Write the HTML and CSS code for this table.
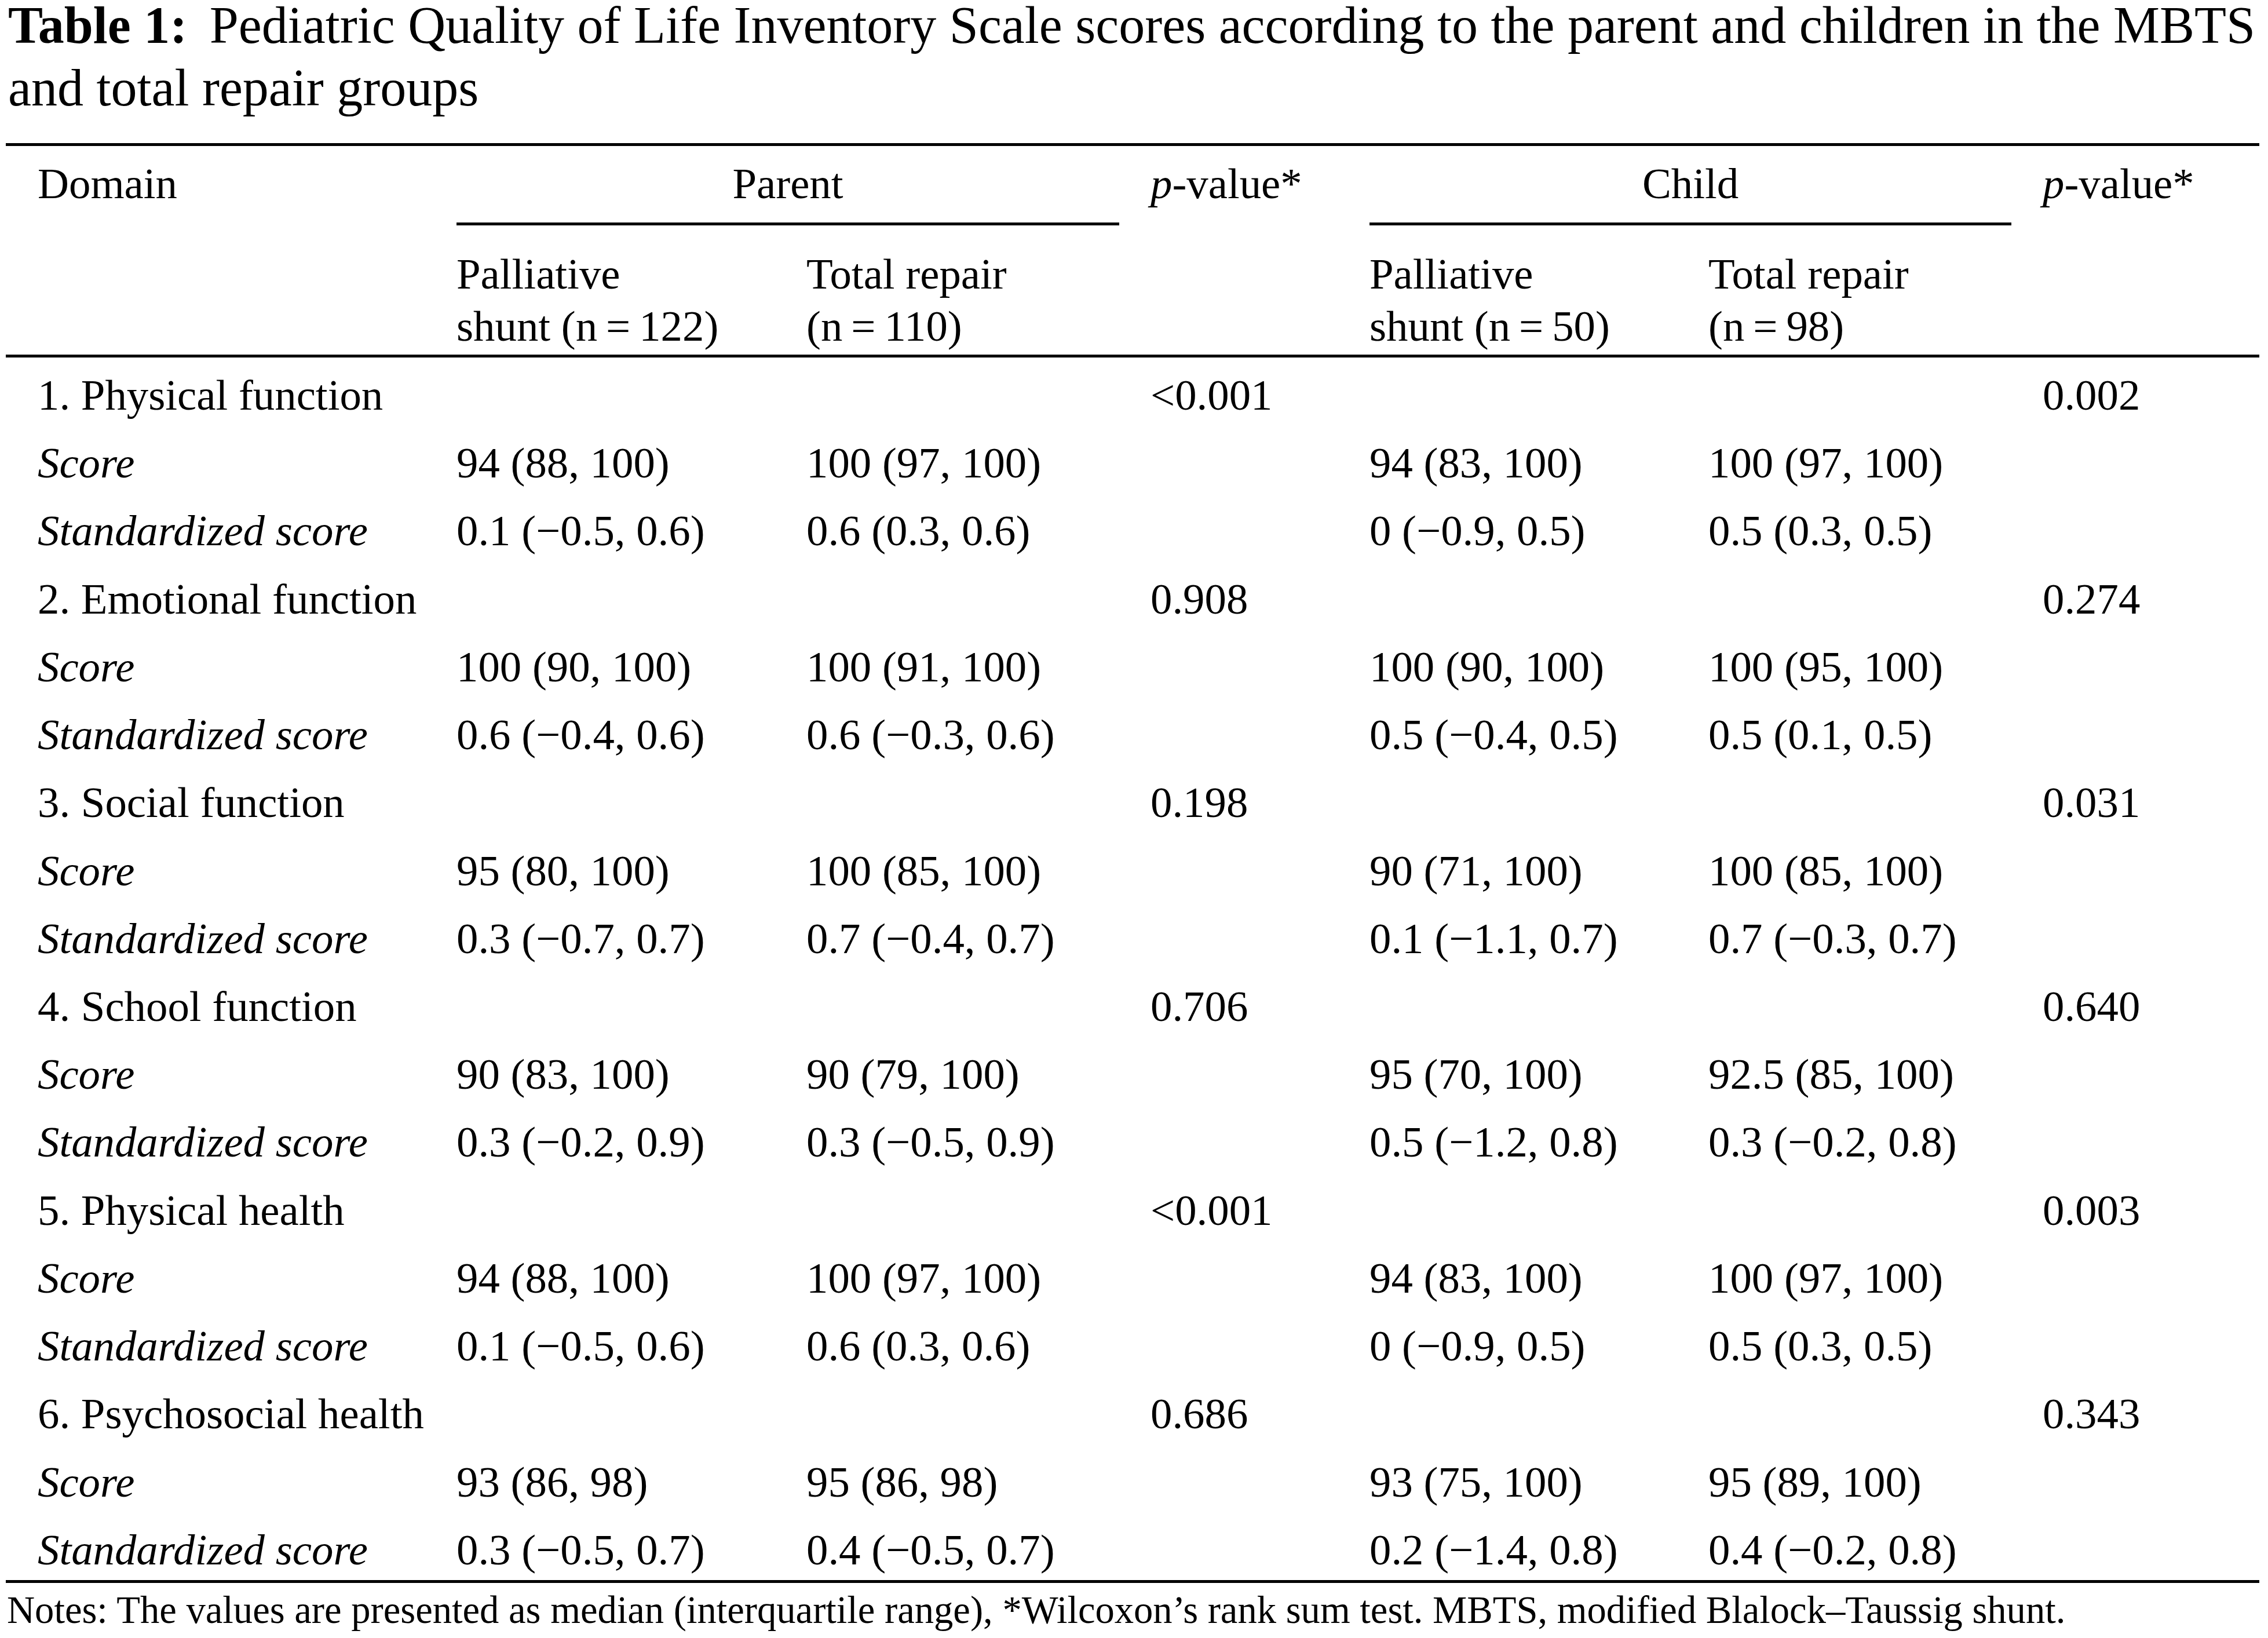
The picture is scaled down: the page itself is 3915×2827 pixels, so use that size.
FILE: index.html
```html
<!DOCTYPE html>
<html lang="en">
<head>
<meta charset="utf-8">
<title>Table 1</title>
<link rel="stylesheet" href="styles.css">
</head>
<body>
<div class="page">
  <p class="caption"><span class="cap-line cap-l1"><b class="label">Table 1:</b> Pediatric Quality of Life Inventory Scale scores according to the parent and children in the MBTS</span><span class="cap-line cap-l2">and total repair groups</span></p>

  <div class="tbl">
    <div class="thead">
      <div class="grid hrow-a">
        <div class="cell first">Domain</div>
        <div class="cell group g-parent">Parent</div>
        <div class="cell c4"><i>p</i>-value*</div>
        <div class="cell group g-child">Child</div>
        <div class="cell c7"><i>p</i>-value*</div>
      </div>
      <div class="grid hrow-b">
        <div class="cell first"></div>
        <div class="cell">Palliative<br>shunt (n&thinsp;=&thinsp;122)</div>
        <div class="cell">Total repair<br>(n&thinsp;=&thinsp;110)</div>
        <div class="cell"></div>
        <div class="cell">Palliative<br>shunt (n&thinsp;=&thinsp;50)</div>
        <div class="cell">Total repair<br>(n&thinsp;=&thinsp;98)</div>
        <div class="cell"></div>
      </div>
    </div>

    <div class="tbody">
      <div class="grid row"><div class="cell first">1. Physical function</div><div class="cell"></div><div class="cell"></div><div class="cell">&lt;0.001</div><div class="cell"></div><div class="cell"></div><div class="cell">0.002</div></div>
      <div class="grid row"><div class="cell first"><i>Score</i></div><div class="cell">94 (88, 100)</div><div class="cell">100 (97, 100)</div><div class="cell"></div><div class="cell">94 (83, 100)</div><div class="cell">100 (97, 100)</div><div class="cell"></div></div>
      <div class="grid row"><div class="cell first"><i>Standardized score</i></div><div class="cell">0.1 (−0.5, 0.6)</div><div class="cell">0.6 (0.3, 0.6)</div><div class="cell"></div><div class="cell">0 (−0.9, 0.5)</div><div class="cell">0.5 (0.3, 0.5)</div><div class="cell"></div></div>

      <div class="grid row"><div class="cell first">2. Emotional function</div><div class="cell"></div><div class="cell"></div><div class="cell">0.908</div><div class="cell"></div><div class="cell"></div><div class="cell">0.274</div></div>
      <div class="grid row"><div class="cell first"><i>Score</i></div><div class="cell">100 (90, 100)</div><div class="cell">100 (91, 100)</div><div class="cell"></div><div class="cell">100 (90, 100)</div><div class="cell">100 (95, 100)</div><div class="cell"></div></div>
      <div class="grid row"><div class="cell first"><i>Standardized score</i></div><div class="cell">0.6 (−0.4, 0.6)</div><div class="cell">0.6 (−0.3, 0.6)</div><div class="cell"></div><div class="cell">0.5 (−0.4, 0.5)</div><div class="cell">0.5 (0.1, 0.5)</div><div class="cell"></div></div>

      <div class="grid row"><div class="cell first">3. Social function</div><div class="cell"></div><div class="cell"></div><div class="cell">0.198</div><div class="cell"></div><div class="cell"></div><div class="cell">0.031</div></div>
      <div class="grid row"><div class="cell first"><i>Score</i></div><div class="cell">95 (80, 100)</div><div class="cell">100 (85, 100)</div><div class="cell"></div><div class="cell">90 (71, 100)</div><div class="cell">100 (85, 100)</div><div class="cell"></div></div>
      <div class="grid row"><div class="cell first"><i>Standardized score</i></div><div class="cell">0.3 (−0.7, 0.7)</div><div class="cell">0.7 (−0.4, 0.7)</div><div class="cell"></div><div class="cell">0.1 (−1.1, 0.7)</div><div class="cell">0.7 (−0.3, 0.7)</div><div class="cell"></div></div>

      <div class="grid row"><div class="cell first">4. School function</div><div class="cell"></div><div class="cell"></div><div class="cell">0.706</div><div class="cell"></div><div class="cell"></div><div class="cell">0.640</div></div>
      <div class="grid row"><div class="cell first"><i>Score</i></div><div class="cell">90 (83, 100)</div><div class="cell">90 (79, 100)</div><div class="cell"></div><div class="cell">95 (70, 100)</div><div class="cell">92.5 (85, 100)</div><div class="cell"></div></div>
      <div class="grid row"><div class="cell first"><i>Standardized score</i></div><div class="cell">0.3 (−0.2, 0.9)</div><div class="cell">0.3 (−0.5, 0.9)</div><div class="cell"></div><div class="cell">0.5 (−1.2, 0.8)</div><div class="cell">0.3 (−0.2, 0.8)</div><div class="cell"></div></div>

      <div class="grid row"><div class="cell first">5. Physical health</div><div class="cell"></div><div class="cell"></div><div class="cell">&lt;0.001</div><div class="cell"></div><div class="cell"></div><div class="cell">0.003</div></div>
      <div class="grid row"><div class="cell first"><i>Score</i></div><div class="cell">94 (88, 100)</div><div class="cell">100 (97, 100)</div><div class="cell"></div><div class="cell">94 (83, 100)</div><div class="cell">100 (97, 100)</div><div class="cell"></div></div>
      <div class="grid row"><div class="cell first"><i>Standardized score</i></div><div class="cell">0.1 (−0.5, 0.6)</div><div class="cell">0.6 (0.3, 0.6)</div><div class="cell"></div><div class="cell">0 (−0.9, 0.5)</div><div class="cell">0.5 (0.3, 0.5)</div><div class="cell"></div></div>

      <div class="grid row"><div class="cell first">6. Psychosocial health</div><div class="cell"></div><div class="cell"></div><div class="cell">0.686</div><div class="cell"></div><div class="cell"></div><div class="cell">0.343</div></div>
      <div class="grid row"><div class="cell first"><i>Score</i></div><div class="cell">93 (86, 98)</div><div class="cell">95 (86, 98)</div><div class="cell"></div><div class="cell">93 (75, 100)</div><div class="cell">95 (89, 100)</div><div class="cell"></div></div>
      <div class="grid row"><div class="cell first"><i>Standardized score</i></div><div class="cell">0.3 (−0.5, 0.7)</div><div class="cell">0.4 (−0.5, 0.7)</div><div class="cell"></div><div class="cell">0.2 (−1.4, 0.8)</div><div class="cell">0.4 (−0.2, 0.8)</div><div class="cell"></div></div>
    </div>
  </div>

  <p class="notes">Notes: The values are presented as median (interquartile range), *Wilcoxon’s rank sum test. MBTS, modified Blalock–Taussig shunt.</p>
</div>
</body>
</html>
```

FILE: styles.css
```css
html, body {
  margin: 0;
  padding: 0;
  background: #ffffff;
}

body {
  font-family: "Liberation Serif", "Times New Roman", serif;
  color: #000000;
}

.page {
  width: 3915px;
}

.caption {
  margin: 0;
  padding-left: 14px;
  font-size: 90px;
  white-space: nowrap;
}

.cap-line {
  display: block;
}

.cap-l1 {
  line-height: 87px;
}

.cap-l2 {
  line-height: 130px;
}

.caption .label {
  font-weight: bold;
  margin-right: 16px;
}

.tbl {
  margin: 30px 15px 0 10px;
  width: 3890px;
  font-size: 74.8px;
}

.grid {
  display: grid;
  grid-template-columns: 778px 604px 594px 378px 585px 577px 374px;
}

.cell {
  white-space: nowrap;
}

.cell.first {
  padding-left: 55px;
}

.thead {
  border-top: 5px solid #000;
  border-bottom: 5px solid #000;
}

.hrow-a {
  align-items: start;
}

.hrow-a .cell {
  padding-top: 20px;
  line-height: 90px;
}

.hrow-a .group {
  padding-bottom: 22px;
  border-bottom: 5px solid #000;
  margin-right: 54px;
  text-align: center;
}

.g-parent {
  grid-column: 2 / 4;
}

.g-child {
  grid-column: 5 / 7;
}

.hrow-b .cell {
  padding-top: 39px;
  padding-bottom: 4px;
  line-height: 90px;
}

.tbody {
  border-bottom: 5px solid #000;
}

.row .cell {
  padding-top: 13px;
  line-height: 104.22px;
  height: 104.22px;
}

.notes {
  margin: 9px 0 0 0;
  padding-left: 12px;
  font-size: 66.6px;
  line-height: 75.4px;
  white-space: nowrap;
}
```
